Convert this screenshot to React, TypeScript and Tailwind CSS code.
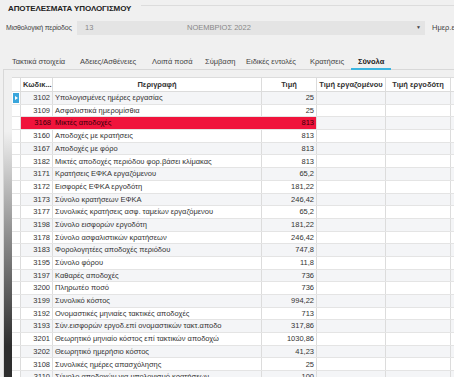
import React from "react";

const rows: [string, string, string][] = [
  ["3102", "Υπολογισμένες ημέρες εργασίας", "25"],
  ["3109", "Ασφαλιστικά ημερομίσθια", "25"],
  ["3168", "Μικτές αποδοχές", "813"],
  ["3160", "Αποδοχές με κρατήσεις", "813"],
  ["3167", "Αποδοχές με φόρο", "813"],
  ["3182", "Μικτές αποδοχές περιόδου φορ.βάσει κλίμακας", "813"],
  ["3171", "Κρατήσεις ΕΦΚΑ εργαζόμενου", "65,2"],
  ["3172", "Εισφορές ΕΦΚΑ εργοδότη", "181,22"],
  ["3173", "Σύνολο κρατήσεων ΕΦΚΑ", "246,42"],
  ["3177", "Συνολικές κρατήσεις ασφ. ταμείων εργαζόμενου", "65,2"],
  ["3198", "Σύνολο εισφορών εργοδότη", "181,22"],
  ["3178", "Σύνολο ασφαλιστικών κρατήσεων", "246,42"],
  ["3183", "Φορολογητέες αποδοχές περιόδου", "747,8"],
  ["3195", "Σύνολο φόρου", "11,8"],
  ["3197", "Καθαρές αποδοχές", "736"],
  ["3200", "Πληρωτέο ποσό", "736"],
  ["3199", "Συνολικό κόστος", "994,22"],
  ["3192", "Ονομαστικές μηνιαίες τακτικές αποδοχές", "713"],
  ["3193", "Σύν.εισφορών εργοδ.επί ονομαστικών τακτ.αποδο", "317,86"],
  ["3201", "Θεωρητικό μηνιαίο κόστος επί τακτικών αποδοχώ", "1030,86"],
  ["3202", "Θεωρητικό ημερήσιο κόστος", "41,23"],
  ["3108", "Συνολικές ημέρες απασχόλησης", "25"],
  ["3110", "Σύνολο αποδοχών για υπολογισμό κρατήσεων", "100"],
];

const tabs: [string, string][] = [
  ["Τακτικά στοιχεία", "w-[68px]"],
  ["Αδειες/Ασθένειες", "w-[72px]"],
  ["Λοιπά ποσά", "w-[53px]"],
  ["Σύμβαση", "w-[41px]"],
  ["Ειδικές εντολές", "w-[64px]"],
  ["Κρατήσεις", "w-[48px]"],
];

export default function App() {
  return (
    <div
      className="w-[454px] h-[377px] overflow-hidden bg-[#f0f0f0] text-[#333] flex flex-col"
      style={{ fontFamily: '"Liberation Sans", Arial, sans-serif' }}
    >
      {/* Title */}
      <div className="flex items-center h-[14px] mt-[1px] pl-[8px]">
        <span className="text-[8px] font-bold tracking-[-0.1px] text-[#222] mt-[2px] whitespace-nowrap">
          ΑΠΟΤΕΛΕΣΜΑΤΑ ΥΠΟΛΟΓΙΣΜΟΥ
        </span>
        <div className="flex-1 ml-[10px] self-start mt-[4px] h-px bg-[#dcdcdc]" />
      </div>

      {/* Period row */}
      <div className="flex items-center h-[14px] mt-[6px] pl-[6px]">
        <span className="w-[71px] shrink-0 whitespace-nowrap overflow-hidden text-[7px] tracking-[-0.2px] text-[#444]">
          Μισθολογική περίοδος
        </span>
        <div className="w-[348px] shrink-0 h-[14px] bg-[#e4e4e4] flex items-center text-[7.5px] text-[#888]">
          <span className="ml-[8px] w-[80px]">13</span>
          <span className="w-[160px] pl-[22px] whitespace-nowrap">ΝΟΕΜΒΡΙΟΣ 2022</span>
          <span className="flex-1" />
          <span className="mr-[4px] text-[5px] text-[#444]">▼</span>
        </div>
        <span className="ml-[7px] text-[7.5px] text-[#444] whitespace-nowrap">Ημερ.ε</span>
      </div>

      {/* Tabs */}
      <div className="mt-[19px] ml-[3px] flex items-end h-[16px] border-b border-[#d8d8d8]">
        <div className="w-[9px] shrink-0" />
        {tabs.map(([t, w]) => (
          <div
            key={t}
            className={`${w} shrink-0 whitespace-nowrap text-[7.5px] text-[#444] h-full flex items-center`}
          >
            {t}
          </div>
        ))}
        <div className="h-full flex flex-col items-center justify-center relative px-[7px] -ml-[7px]">
          <span className="text-[7.5px] font-bold text-[#222]">Σύνολα</span>
          <div className="absolute bottom-[-1px] left-0 right-0 h-[2px] bg-[#3bb5e0]" />
        </div>
      </div>

      {/* Grid area */}
      <div className="flex-1 flex ml-[3px] border-l border-[#d8d8d8] min-h-0">
        <div className="w-[8px] shrink-0 bg-[linear-gradient(to_bottom,#f0f0f0_20%,#8a8a8a_55%,#2e2e2e_90%)]" />
        <div className="flex-1 mt-[7px] bg-white overflow-hidden">
          {/* header */}
          <div className="flex h-[15px] border-b border-t border-[#dcdcdc] text-[7.5px] text-[#333]">
            <div className="w-[9px] shrink-0 border-r border-[#dcdcdc]" />
            <div className="w-[32px] shrink-0 border-r border-[#dcdcdc] flex items-center pl-[2px] font-bold">
              Κωδικ...
            </div>
            <div className="w-[209px] shrink-0 border-r border-[#dcdcdc] flex items-center justify-center font-bold">
              Περιγραφή
            </div>
            <div className="w-[55px] shrink-0 border-r border-[#dcdcdc] flex items-center justify-center font-bold">
              Τιμή
            </div>
            <div className="w-[69px] shrink-0 border-r border-[#dcdcdc] flex items-center justify-center font-bold whitespace-nowrap">
              Τιμή εργαζομένου
            </div>
            <div className="w-[65px] shrink-0 border-r border-[#dcdcdc] flex items-center justify-center font-bold whitespace-nowrap">
              Τιμή εργοδότη
            </div>
            <div className="flex-1" />
          </div>
          {rows.map(([code, desc, val], i) => {
            const red = i === 2;
            const bg = i % 2 === 0 ? "bg-[#f4f5f7]" : "bg-white";
            const cell = red ? "bg-[#f0143c] text-[#3a0008]" : bg;
            return (
              <div
                key={code}
                className="flex h-[12.7px] border-b border-[#e4e4e4] text-[7.5px] leading-none"
              >
                <div className="w-[9px] shrink-0 border-r border-[#dcdcdc] bg-white flex items-stretch">
                  {i === 0 && (
                    <div className="flex-1 m-[1px] bg-[#3aa6dc] flex items-center justify-center">
                      <svg width="3" height="4" viewBox="0 0 3 4">
                        <path d="M0 0 L3 2 L0 4 Z" fill="#fff" />
                      </svg>
                    </div>
                  )}
                </div>
                <div
                  className={`w-[32px] shrink-0 ${red ? "" : "border-r border-[#dcdcdc]"} ${cell} flex items-center justify-end pr-[2px]`}
                >
                  {code}
                </div>
                <div
                  className={`w-[209px] shrink-0 ${red ? "" : "border-r border-[#dcdcdc]"} ${cell} flex items-center pl-[2px] whitespace-nowrap overflow-hidden`}
                >
                  {desc}
                </div>
                <div
                  className={`w-[55px] shrink-0 border-r border-[#dcdcdc] ${cell} flex items-center justify-end pr-[2px]`}
                >
                  {val}
                </div>
                <div className={`w-[69px] shrink-0 border-r border-[#dcdcdc] ${bg}`} />
                <div className={`w-[65px] shrink-0 border-r border-[#dcdcdc] ${bg}`} />
                <div className={`flex-1 ${bg}`} />
              </div>
            );
          })}
        </div>
      </div>
    </div>
  );
}
